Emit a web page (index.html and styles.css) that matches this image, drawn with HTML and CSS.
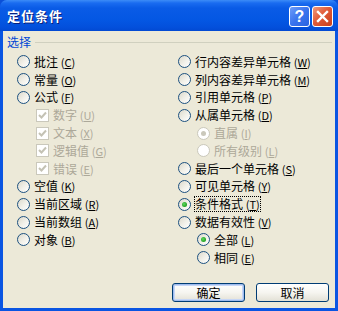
FILE: index.html
```html
<!DOCTYPE html>
<html lang="zh">
<head>
<meta charset="utf-8">
<title>定位条件</title>
<link rel="stylesheet" href="styles.css">
</head>
<body>
<div class="window">
  <div class="titlebar">
    <span class="title">定位条件</span>
    <div class="tbtns">
      <span class="tb help">?</span>
      <span class="tb close"><svg width="13" height="13" viewBox="0 0 13 13"><path d="M2 2 L11 11 M11 2 L2 11" stroke="#fff" stroke-width="2.4" stroke-linecap="square"/></svg></span>
    </div>
  </div>
  <div class="client">
    <div class="group-head"><span class="group-label">选择</span><span class="rule"></span></div>
    <div class="cols">
      <div class="col">
        <div class="opt"><span class="radio"></span><span class="lbl">批注 <span class="mn">(<u>C</u>)</span></span></div>
        <div class="opt"><span class="radio"></span><span class="lbl">常量 <span class="mn">(<u>O</u>)</span></span></div>
        <div class="opt"><span class="radio"></span><span class="lbl">公式 <span class="mn">(<u>F</u>)</span></span></div>
        <div class="opt sub dis"><span class="check"><svg width="11" height="11" viewBox="0 0 11 11"><path d="M2 5 L4.5 7.5 L9 2.5" fill="none" stroke="#c4c2b4" stroke-width="2"/></svg></span><span class="lbl">数字 <span class="mn">(<u>U</u>)</span></span></div>
        <div class="opt sub dis"><span class="check"><svg width="11" height="11" viewBox="0 0 11 11"><path d="M2 5 L4.5 7.5 L9 2.5" fill="none" stroke="#c4c2b4" stroke-width="2"/></svg></span><span class="lbl">文本 <span class="mn">(<u>X</u>)</span></span></div>
        <div class="opt sub dis"><span class="check"><svg width="11" height="11" viewBox="0 0 11 11"><path d="M2 5 L4.5 7.5 L9 2.5" fill="none" stroke="#c4c2b4" stroke-width="2"/></svg></span><span class="lbl">逻辑值 <span class="mn">(<u>G</u>)</span></span></div>
        <div class="opt sub dis"><span class="check"><svg width="11" height="11" viewBox="0 0 11 11"><path d="M2 5 L4.5 7.5 L9 2.5" fill="none" stroke="#c4c2b4" stroke-width="2"/></svg></span><span class="lbl">错误 <span class="mn">(<u>E</u>)</span></span></div>
        <div class="opt"><span class="radio"></span><span class="lbl">空值 <span class="mn">(<u>K</u>)</span></span></div>
        <div class="opt"><span class="radio"></span><span class="lbl">当前区域 <span class="mn">(<u>R</u>)</span></span></div>
        <div class="opt"><span class="radio"></span><span class="lbl">当前数组 <span class="mn">(<u>A</u>)</span></span></div>
        <div class="opt"><span class="radio"></span><span class="lbl">对象 <span class="mn">(<u>B</u>)</span></span></div>
      </div>
      <div class="col">
        <div class="opt"><span class="radio"></span><span class="lbl">行内容差异单元格 <span class="mn">(<u>W</u>)</span></span></div>
        <div class="opt"><span class="radio"></span><span class="lbl">列内容差异单元格 <span class="mn">(<u>M</u>)</span></span></div>
        <div class="opt"><span class="radio"></span><span class="lbl">引用单元格 <span class="mn">(<u>P</u>)</span></span></div>
        <div class="opt"><span class="radio"></span><span class="lbl">从属单元格 <span class="mn">(<u>D</u>)</span></span></div>
        <div class="opt sub dis"><span class="radio on"></span><span class="lbl">直属 <span class="mn">(<u>I</u>)</span></span></div>
        <div class="opt sub dis"><span class="radio"></span><span class="lbl">所有级别 <span class="mn">(<u>L</u>)</span></span></div>
        <div class="opt"><span class="radio"></span><span class="lbl">最后一个单元格 <span class="mn">(<u>S</u>)</span></span></div>
        <div class="opt"><span class="radio"></span><span class="lbl">可见单元格 <span class="mn">(<u>Y</u>)</span></span></div>
        <div class="opt"><span class="radio on"></span><span class="lbl focus">条件格式 <span class="mn">(<u>T</u>)</span></span></div>
        <div class="opt"><span class="radio"></span><span class="lbl">数据有效性 <span class="mn">(<u>V</u>)</span></span></div>
        <div class="opt sub"><span class="radio on"></span><span class="lbl">全部 <span class="mn">(<u>L</u>)</span></span></div>
        <div class="opt sub"><span class="radio"></span><span class="lbl">相同 <span class="mn">(<u>E</u>)</span></span></div>
      </div>
    </div>
    <div class="buttons">
      <span class="btn default">确定</span>
      <span class="btn">取消</span>
    </div>
  </div>
</div>
</body>
</html>
```
FILE: styles.css
```css
html, body {
  margin: 0;
  padding: 0;
  background: #0a4fd8;
}
body {
  font-family: "Noto Sans CJK SC", "Noto Sans", sans-serif;
  font-size: 12px;
  color: #000;
}
.window {
  width: 338px;
  height: 311px;
  display: flex;
  flex-direction: column;
  background: #0a55e2;
  border-radius: 7px 7px 0 0;
  overflow: hidden;
}
.titlebar {
  height: 31px;
  flex: none;
  display: flex;
  align-items: center;
  justify-content: space-between;
  padding: 0 5px 0 7px;
  background: linear-gradient(#3c8cf7 0, #1a6cf0 3px, #0a5be6 8px, #0457e3 20px, #0350dc 27px, #0249d2 31px);
  box-sizing: border-box;
}
.title {
  color: #fff;
  font-weight: bold;
  font-size: 13px;
  letter-spacing: 1px;
  text-shadow: 1px 1px 0 #0a1e7a;
  line-height: 16px;
}
.tbtns {
  display: flex;
  gap: 2px;
  padding-top: 2px;
}
.tb {
  width: 19px;
  height: 19px;
  border: 1px solid #fff;
  border-radius: 3px;
  display: flex;
  align-items: center;
  justify-content: center;
  color: #fff;
}
.help {
  background: linear-gradient(135deg, #6d9cf8, #3a74ee 50%, #2a62e0);
  font-family: "Liberation Sans", sans-serif;
  font-weight: bold;
  font-size: 16px;
  line-height: 19px;
}
.close {
  background: linear-gradient(135deg, #f09a7c, #e05a38 45%, #c9401c);
}
.client {
  flex: 1;
  margin: 0 3px 3px;
  background: #ece9d8;
  display: flex;
  flex-direction: column;
}
.group-head {
  display: flex;
  align-items: center;
  gap: 4px;
  padding: 4px 3px 0 4px;
  height: 14px;
}
.group-label {
  color: #0046d5;
  line-height: 14px;
}
.rule {
  flex: 1;
  height: 1px;
  background: #d0d0bf;
  margin-top: 1px;
}
.cols {
  display: grid;
  grid-template-columns: 161px 1fr;
  padding-left: 14px;
  margin-top: 4px;
}
.opt {
  display: flex;
  align-items: center;
  gap: 4px;
  height: 17.8px;
  white-space: nowrap;
}
.opt.sub {
  padding-left: 19px;
}
.opt.dis .lbl {
  color: #aca899;
}
.lbl {
  line-height: 14px;
  border: 1px dotted transparent;
  margin-left: -1px;
}
.lbl.focus {
  border-color: #000;
}
.mn {
  font-size: 11px;
}
.radio {
  width: 11px;
  height: 11px;
  border: 1px solid #1c5180;
  border-radius: 50%;
  background: linear-gradient(135deg, #dcd9cb 0, #f2f1ea 55%, #ffffff 100%);
  position: relative;
  flex: none;
}
.radio.on::after {
  content: "";
  position: absolute;
  left: 3px;
  top: 3px;
  width: 5px;
  height: 5px;
  border-radius: 50%;
  background: radial-gradient(circle at 40% 40%, #5fd85f, #21a121 70%);
}
.dis .radio {
  border-color: #cac8bb;
  background: #fff;
}
.dis .radio.on::after {
  background: #cac8bb;
}
.check {
  width: 11px;
  height: 11px;
  border: 1px solid #cac8bb;
  background: #fff;
  display: flex;
  align-items: center;
  justify-content: center;
  flex: none;
}
.buttons {
  margin-top: auto;
  display: flex;
  justify-content: flex-end;
  gap: 11px;
  padding: 0 6px 6px 0;
}
.btn {
  width: 71px;
  height: 17px;
  border: 1px solid #003c74;
  border-radius: 3px;
  background: linear-gradient(#ffffff 0, #f6f5f0 50%, #e3e1d6 100%);
  display: flex;
  align-items: center;
  justify-content: center;
  line-height: 14px;
}
.btn.default {
  box-shadow: inset 0 0 0 1px #9ebbee, inset 0 0 0 2px #c6d6f6;
}
```
